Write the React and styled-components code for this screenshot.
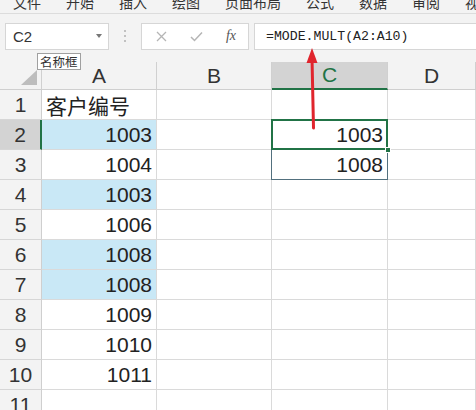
import React from "react";
import styled, { createGlobalStyle } from "styled-components";

const GlobalStyle = createGlobalStyle`
  html, body {
    margin: 0;
    padding: 0;
    background: #fff;
    overflow: hidden;
  }
  * {
    box-sizing: border-box;
  }
`;

const Page = styled.div`
  position: relative;
  width: 476px;
  height: 410px;
  overflow: hidden;
  font-family: "Liberation Sans", "Noto Sans CJK SC", sans-serif;
`;

const MenuBar = styled.div`
  height: 14px;
  overflow: hidden;
  background: #f3f3f3;
  border-bottom: 1px solid #dcdcdc;
`;

const MenuInner = styled.div`
  display: flex;
  gap: 25px;
  padding-left: 13px;
  margin-top: -8px;
  font-family: "Noto Sans CJK SC", sans-serif;
  font-size: 14px;
  line-height: 20px;
  color: #333;
  white-space: nowrap;
`;

const FormulaBar = styled.div`
  display: flex;
  align-items: center;
  height: 48px;
  padding: 0 0 4px 5px;
  background: #f3f3f3;
`;

const Field = styled.div`
  display: flex;
  align-items: center;
  height: 27px;
  background: #fff;
  border: 1px solid #d6d6d6;
`;

const NameBox = styled(Field)`
  width: 104px;
  padding: 0 6px 0 7px;
  justify-content: space-between;
  font-size: 15px;
  color: #333;
`;

const Caret = styled.span`
  width: 0;
  height: 0;
  border-left: 3.5px solid transparent;
  border-right: 3.5px solid transparent;
  border-top: 4px solid #777;
`;

const Dots = styled.div`
  width: 32px;
  display: flex;
  flex-direction: column;
  align-items: center;
  gap: 3px;

  span {
    width: 2px;
    height: 2px;
    background: #b0b0b0;
    border-radius: 1px;
  }
`;

const FxBox = styled(Field)`
  width: 108px;
  justify-content: space-between;
  padding: 0 12px 0 14px;
`;

const Fx = styled.span`
  font-family: "Liberation Serif", serif;
  font-style: italic;
  font-size: 14px;
  color: #555;
`;

const FormulaInput = styled(Field)`
  flex: 1;
  margin-left: 5px;
  border-right: none;
  padding-left: 11px;
  font-family: "Liberation Mono", monospace;
  font-size: 13.2px;
  color: #222;
`;

const Sheet = styled.div`
  display: grid;
  grid-template-columns: 42px 115px 115px 116px 1fr;
  grid-template-rows: 28px repeat(11, 30px);
`;

const Cell = styled.div`
  position: relative;
  display: flex;
  align-items: center;
  justify-content: flex-end;
  padding-right: 4px;
  border-right: 1px solid #dadada;
  border-bottom: 1px solid #dadada;
  background: ${(p) => (p.$hl ? "#c9e8f6" : "#fff")};
  font-size: 21px;
  color: #222;
`;

const TextCell = styled(Cell)`
  justify-content: flex-start;
  padding-left: 4px;
  font-family: "Noto Sans CJK SC", sans-serif;
  font-size: 21px;
`;

const Selected = styled(Cell)`
  &::after {
    content: "";
    position: absolute;
    left: -1px;
    top: -1px;
    right: -1px;
    bottom: -1px;
    border: 2px solid #217346;
  }
`;

const Handle = styled.span`
  position: absolute;
  right: -4px;
  bottom: -4px;
  width: 6px;
  height: 6px;
  background: #217346;
  border: 1px solid #fff;
  z-index: 2;
`;

const Spill = styled(Cell)`
  &::after {
    content: "";
    position: absolute;
    left: -1px;
    top: 0;
    right: -1px;
    bottom: -1px;
    border: 1px solid #52707e;
    border-top: none;
  }
`;

const ColHead = styled.div`
  display: flex;
  align-items: center;
  justify-content: center;
  background: ${(p) => (p.$active ? "#d3d3d3" : "#f3f3f3")};
  border-right: 1px solid #d0d0d0;
  border-bottom: ${(p) => (p.$active ? "2px solid #217346" : "1px solid #cfcfcf")};
  font-size: 21px;
  color: ${(p) => (p.$active ? "#217346" : "#333")};
`;

const Corner = styled(ColHead)`
  position: relative;

  &::after {
    content: "";
    position: absolute;
    right: 4px;
    bottom: 4px;
    width: 0;
    height: 0;
    border-left: 16px solid transparent;
    border-bottom: 15px solid #bdbdbd;
  }
`;

const RowHead = styled.div`
  display: flex;
  align-items: center;
  justify-content: center;
  background: ${(p) => (p.$active ? "#d3d3d3" : "#f3f3f3")};
  border-right: ${(p) => (p.$active ? "2px solid #217346" : "1px solid #cfcfcf")};
  border-bottom: 1px solid #d6d6d6;
  font-size: 21px;
  color: #333;
`;

const Tooltip = styled.div`
  position: absolute;
  left: 37px;
  top: 53px;
  padding: 0 2px;
  height: 17px;
  line-height: 15px;
  background: #fff;
  border: 1px solid #a0a0a0;
  font-family: "Noto Sans CJK SC", sans-serif;
  font-size: 12.5px;
  color: #333;
  z-index: 5;
`;

const Arrow = styled.svg`
  position: absolute;
  left: 300px;
  top: 44px;
  z-index: 6;
`;

const menus = ["文件", "开始", "插入", "绘图", "页面布局", "公式", "数据", "审阅", "视图"];

const colA = [null, "1003", "1004", "1003", "1006", "1008", "1008", "1009", "1010", "1011", null];
const hlRows = [2, 4, 6, 7];

export default function App() {
  const rows = [];
  for (let r = 1; r <= 11; r++) {
    const active = r === 2;
    rows.push(<RowHead key={`h${r}`} $active={active}>{r}</RowHead>);
    if (r === 1) {
      rows.push(<TextCell key={`a${r}`}>客户编号</TextCell>);
    } else {
      rows.push(
        <Cell key={`a${r}`} $hl={hlRows.includes(r)}>
          {colA[r - 1]}
        </Cell>
      );
    }
    rows.push(<Cell key={`b${r}`} />);
    if (r === 2) {
      rows.push(
        <Selected key={`c${r}`}>
          1003
          <Handle />
        </Selected>
      );
    } else if (r === 3) {
      rows.push(<Spill key={`c${r}`}>1008</Spill>);
    } else {
      rows.push(<Cell key={`c${r}`} />);
    }
    rows.push(<Cell key={`d${r}`} />);
  }

  return (
    <Page>
      <GlobalStyle />
      <MenuBar>
        <MenuInner>
          {menus.map((m) => (
            <span key={m}>{m}</span>
          ))}
        </MenuInner>
      </MenuBar>
      <FormulaBar>
        <NameBox>
          C2
          <Caret />
        </NameBox>
        <Dots>
          <span />
          <span />
          <span />
        </Dots>
        <FxBox>
          <svg width="11" height="11" viewBox="0 0 11 11">
            <path d="M1 1 L10 10 M10 1 L1 10" stroke="#b5b5b5" strokeWidth="1.3" fill="none" />
          </svg>
          <svg width="13" height="11" viewBox="0 0 13 11">
            <path d="M1 6 L4.5 9.5 L12 1.5" stroke="#b5b5b5" strokeWidth="1.5" fill="none" />
          </svg>
          <Fx>fx</Fx>
        </FxBox>
        <FormulaInput>=MODE.MULT(A2:A10)</FormulaInput>
      </FormulaBar>
      <Sheet>
        <Corner />
        <ColHead>A</ColHead>
        <ColHead>B</ColHead>
        <ColHead $active>C</ColHead>
        <ColHead>D</ColHead>
        {rows}
      </Sheet>
      <Tooltip>名称框</Tooltip>
      <Arrow width="24" height="90" viewBox="0 0 24 90">
        <path d="M13.5 84 L12 14" stroke="#e0252d" strokeWidth="3" fill="none" strokeLinecap="round" />
        <path d="M12 4 L17.5 19 L6.5 19 Z" fill="#e0252d" />
      </Arrow>
    </Page>
  );
}
